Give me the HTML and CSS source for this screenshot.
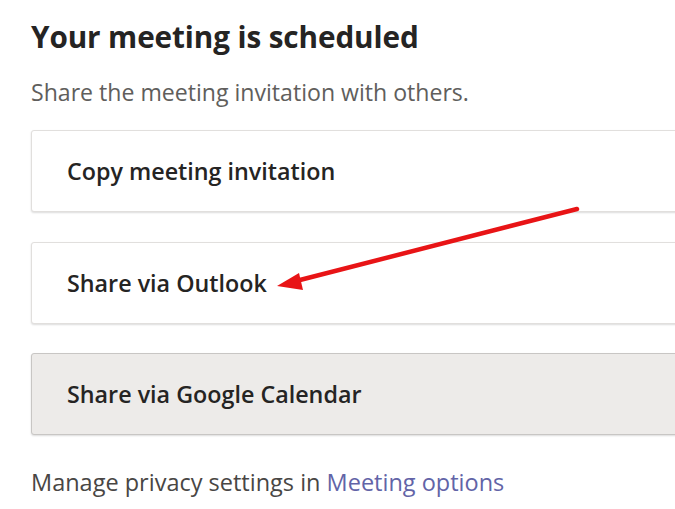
FILE: index.html
```html
<!DOCTYPE html>
<html>
<head>
<meta charset="utf-8">
<link rel="stylesheet" href="styles.css">
</head>
<body>
<div class="panel">
  <h1 class="title">Your meeting is scheduled</h1>
  <p class="subtitle">Share the meeting invitation with others.</p>
  <div class="options">
    <div class="option">Copy meeting invitation</div>
    <div class="option">Share via Outlook</div>
    <div class="option option-hover">Share via Google Calendar</div>
  </div>
  <p class="footer">Manage privacy settings in <a class="link" href="#">Meeting options</a></p>
  <svg class="arrow" width="675" height="509" viewBox="0 0 675 509">
    <line x1="577" y1="209" x2="296" y2="281" stroke="#e81416" stroke-width="4.5" stroke-linecap="round"/>
    <polygon points="277,286 299,273 303,290" fill="#e81416"/>
  </svg>
</div>
</body>
</html>
```
FILE: styles.css
```css
html, body {
  margin: 0;
  padding: 0;
  background: #ffffff;
}
.panel {
  position: relative;
  width: 675px;
  height: 509px;
  overflow: hidden;
  padding: 18px 0 0 31px;
  box-sizing: border-box;
  font-family: "Open Sans", "Noto Sans", sans-serif;
}
.title {
  margin: 0;
  font-size: 29.7px;
  font-weight: 700;
  line-height: 37px;
  color: #252423;
  letter-spacing: -0.1px;
}
.subtitle {
  margin: 22px 0 0 0;
  font-size: 23.1px;
  line-height: 30px;
  color: #605e5c;
}
.options {
  display: flex;
  flex-direction: column;
  gap: 29.5px;
  margin-top: 23px;
  margin-right: -20px;
}
.option {
  height: 82px;
  box-sizing: border-box;
  border: 1px solid #e1dfdd;
  border-radius: 3px;
  box-shadow: 0 1px 2px rgba(0,0,0,0.14);
  background: #ffffff;
  display: flex;
  align-items: center;
  padding-left: 35px;
  font-size: 23.3px;
  font-weight: 600;
  color: #252423;
}
.option-hover {
  background: #edebe9;
  border-color: #c8c6c4;
}
.footer {
  margin: 32px 0 0 0;
  font-size: 23.5px;
  line-height: 30px;
  color: #484644;
}
.link {
  color: #6264a7;
  text-decoration: none;
}
.arrow {
  position: absolute;
  left: 0;
  top: 0;
  pointer-events: none;
}
```
